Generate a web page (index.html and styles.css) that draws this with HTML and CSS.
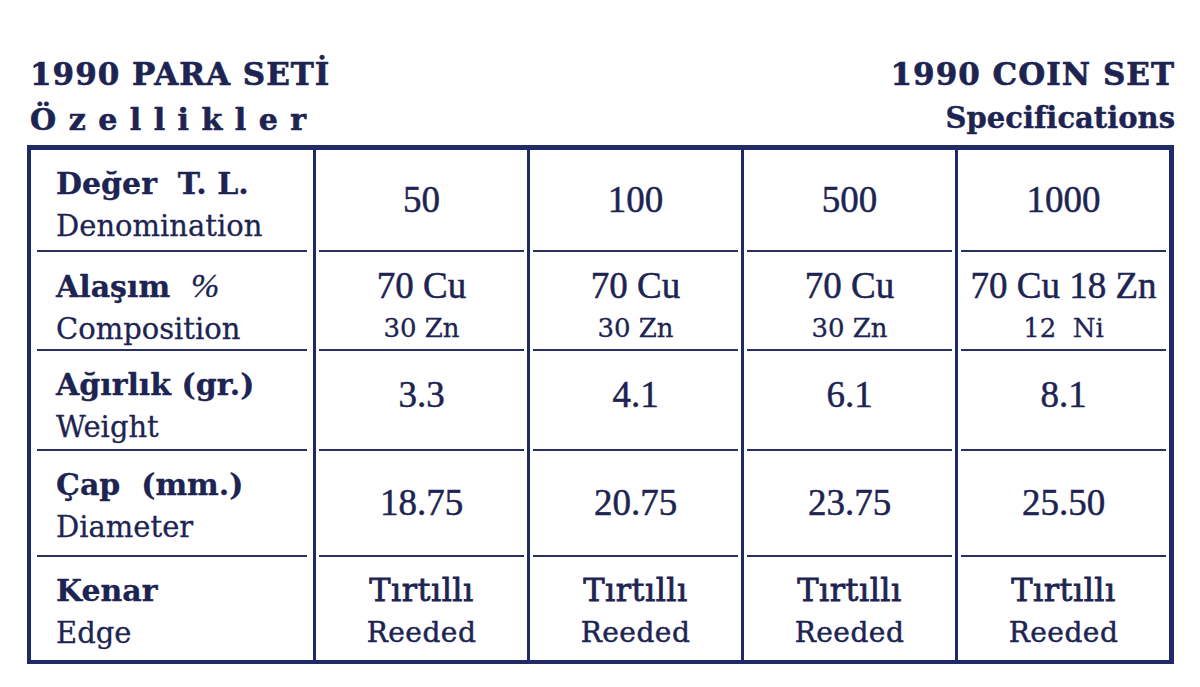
FILE: index.html
```html
<!DOCTYPE html>
<html lang="tr">
<head>
<meta charset="utf-8">
<title>1990 Para Seti</title>
<link rel="stylesheet" href="styles.css">
</head>
<body>
<div class="page">
  <header class="head">
    <div class="head-left">
      <div class="title">1990 PARA SETİ</div>
      <div class="subtitle-spaced">Özellikler</div>
    </div>
    <div class="head-right">
      <div class="title">1990 COIN SET</div>
      <div class="subtitle">Specifications</div>
    </div>
  </header>

  <div class="table">
    <div class="cell label"><div class="in"><span class="tr">Değer&nbsp; T. L.</span><span class="en">Denomination</span></div></div>
    <div class="cell val"><div class="in"><span class="v1">50</span></div></div>
    <div class="cell val"><div class="in"><span class="v1">100</span></div></div>
    <div class="cell val"><div class="in"><span class="v1">500</span></div></div>
    <div class="cell val"><div class="in"><span class="v1">1000</span></div></div>

    <div class="cell label"><div class="in"><span class="tr">Alaşım&nbsp; <span class="pct">%</span></span><span class="en">Composition</span></div></div>
    <div class="cell val"><div class="in two"><span class="v1">70 Cu</span><span class="v2">30 Zn</span></div></div>
    <div class="cell val"><div class="in two"><span class="v1">70 Cu</span><span class="v2">30 Zn</span></div></div>
    <div class="cell val"><div class="in two"><span class="v1">70 Cu</span><span class="v2">30 Zn</span></div></div>
    <div class="cell val"><div class="in two"><span class="v1">70 Cu 18 Zn</span><span class="v2">12&nbsp; Ni</span></div></div>

    <div class="cell label"><div class="in"><span class="tr">Ağırlık (gr.)</span><span class="en">Weight</span></div></div>
    <div class="cell val"><div class="in up"><span class="v1">3.3</span></div></div>
    <div class="cell val"><div class="in up"><span class="v1">4.1</span></div></div>
    <div class="cell val"><div class="in up"><span class="v1">6.1</span></div></div>
    <div class="cell val"><div class="in up"><span class="v1">8.1</span></div></div>

    <div class="cell label"><div class="in"><span class="tr">Çap&nbsp; (mm.)</span><span class="en">Diameter</span></div></div>
    <div class="cell val"><div class="in"><span class="v1">18.75</span></div></div>
    <div class="cell val"><div class="in"><span class="v1">20.75</span></div></div>
    <div class="cell val"><div class="in"><span class="v1">23.75</span></div></div>
    <div class="cell val"><div class="in"><span class="v1">25.50</span></div></div>

    <div class="cell label last"><div class="in"><span class="tr">Kenar</span><span class="en">Edge</span></div></div>
    <div class="cell val last"><div class="in two"><span class="e1">Tırtıllı</span><span class="e2">Reeded</span></div></div>
    <div class="cell val last"><div class="in two"><span class="e1">Tırtıllı</span><span class="e2">Reeded</span></div></div>
    <div class="cell val last"><div class="in two"><span class="e1">Tırtıllı</span><span class="e2">Reeded</span></div></div>
    <div class="cell val last"><div class="in two"><span class="e1">Tırtıllı</span><span class="e2">Reeded</span></div></div>
  </div>
</div>
</body>
</html>
```

FILE: styles.css
```css
* { box-sizing: border-box; }

html, body {
  margin: 0;
  padding: 0;
  background: #ffffff;
}

body {
  color: #1d2452;
  font-family: "DejaVu Serif", "Liberation Serif", serif;
}

.page {
  width: 1200px;
  height: 687px;
  padding: 52px 25px 0 27px;
  overflow: hidden;
}

/* ---------- header ---------- */
.head {
  display: flex;
  justify-content: space-between;
  padding-left: 3px;
}

.head-left, .head-right {
  display: flex;
  flex-direction: column;
}

.head-right {
  align-items: flex-end;
}

.title {
  font-weight: bold;
  font-size: 31px;
  line-height: 45px;
  letter-spacing: 1px;
  white-space: nowrap;
  -webkit-text-stroke: 0.6px #1d2452;
}

.subtitle-spaced {
  font-weight: bold;
  font-size: 30px;
  line-height: 45px;
  letter-spacing: 12.5px;
  white-space: nowrap;
  -webkit-text-stroke: 0.6px #1d2452;
}

.subtitle {
  font-weight: bold;
  font-size: 29px;
  line-height: 43px;
  white-space: nowrap;
  -webkit-text-stroke: 0.4px #1d2452;
}

/* ---------- table ---------- */
.table {
  margin-top: 3px;
  width: 1147px;
  display: grid;
  grid-template-columns: 282px repeat(4, 1fr);
  grid-template-rows: 102px 99px 100px 106px 103px;
  border: 4px solid #1f2a66;
  border-top-width: 5px;
  border-right-width: 5px;
}

.cell {
  display: flex;
}

.cell.label {
  padding: 0 6px;
}

.cell.val {
  padding: 0 3px;
  border-left: 3px solid #1f2a66;
}

.in {
  flex: 1;
  display: flex;
  flex-direction: column;
  border-bottom: 2px solid #27305f;
}

.last .in {
  border-bottom: none;
}

/* label column */
.label .in {
  align-items: flex-start;
  padding: 12px 0 0 19px;
}

.tr {
  font-weight: bold;
  font-size: 30px;
  line-height: 43px;
  white-space: nowrap;
  -webkit-text-stroke: 0.3px #1d2452;
}

.en {
  font-size: 29px;
  line-height: 43px;
  white-space: nowrap;
  -webkit-text-stroke: 0.3px #1d2452;
}

.pct {
  font-family: "Liberation Serif", serif;
  font-style: italic;
  font-weight: normal;
  font-size: 34px;
}

/* value columns */
.val .in {
  align-items: center;
  justify-content: center;
  padding-bottom: 2px;
}

.val .in.up {
  padding-bottom: 12px;
}

.val .in.two {
  justify-content: flex-start;
  padding-top: 12px;
}

.v1 {
  font-family: "Liberation Serif", serif;
  font-size: 37px;
  line-height: 43px;
  white-space: nowrap;
  -webkit-text-stroke: 0.5px #1d2452;
}

.v2 {
  font-size: 26px;
  line-height: 42px;
  white-space: nowrap;
  -webkit-text-stroke: 0.3px #1d2452;
}

.e1 {
  font-size: 32px;
  line-height: 43px;
  letter-spacing: 0.5px;
  white-space: nowrap;
  -webkit-text-stroke: 0.8px #1d2452;
}

.e2 {
  font-size: 28px;
  line-height: 42px;
  letter-spacing: 0.5px;
  white-space: nowrap;
  -webkit-text-stroke: 0.5px #1d2452;
}
```
